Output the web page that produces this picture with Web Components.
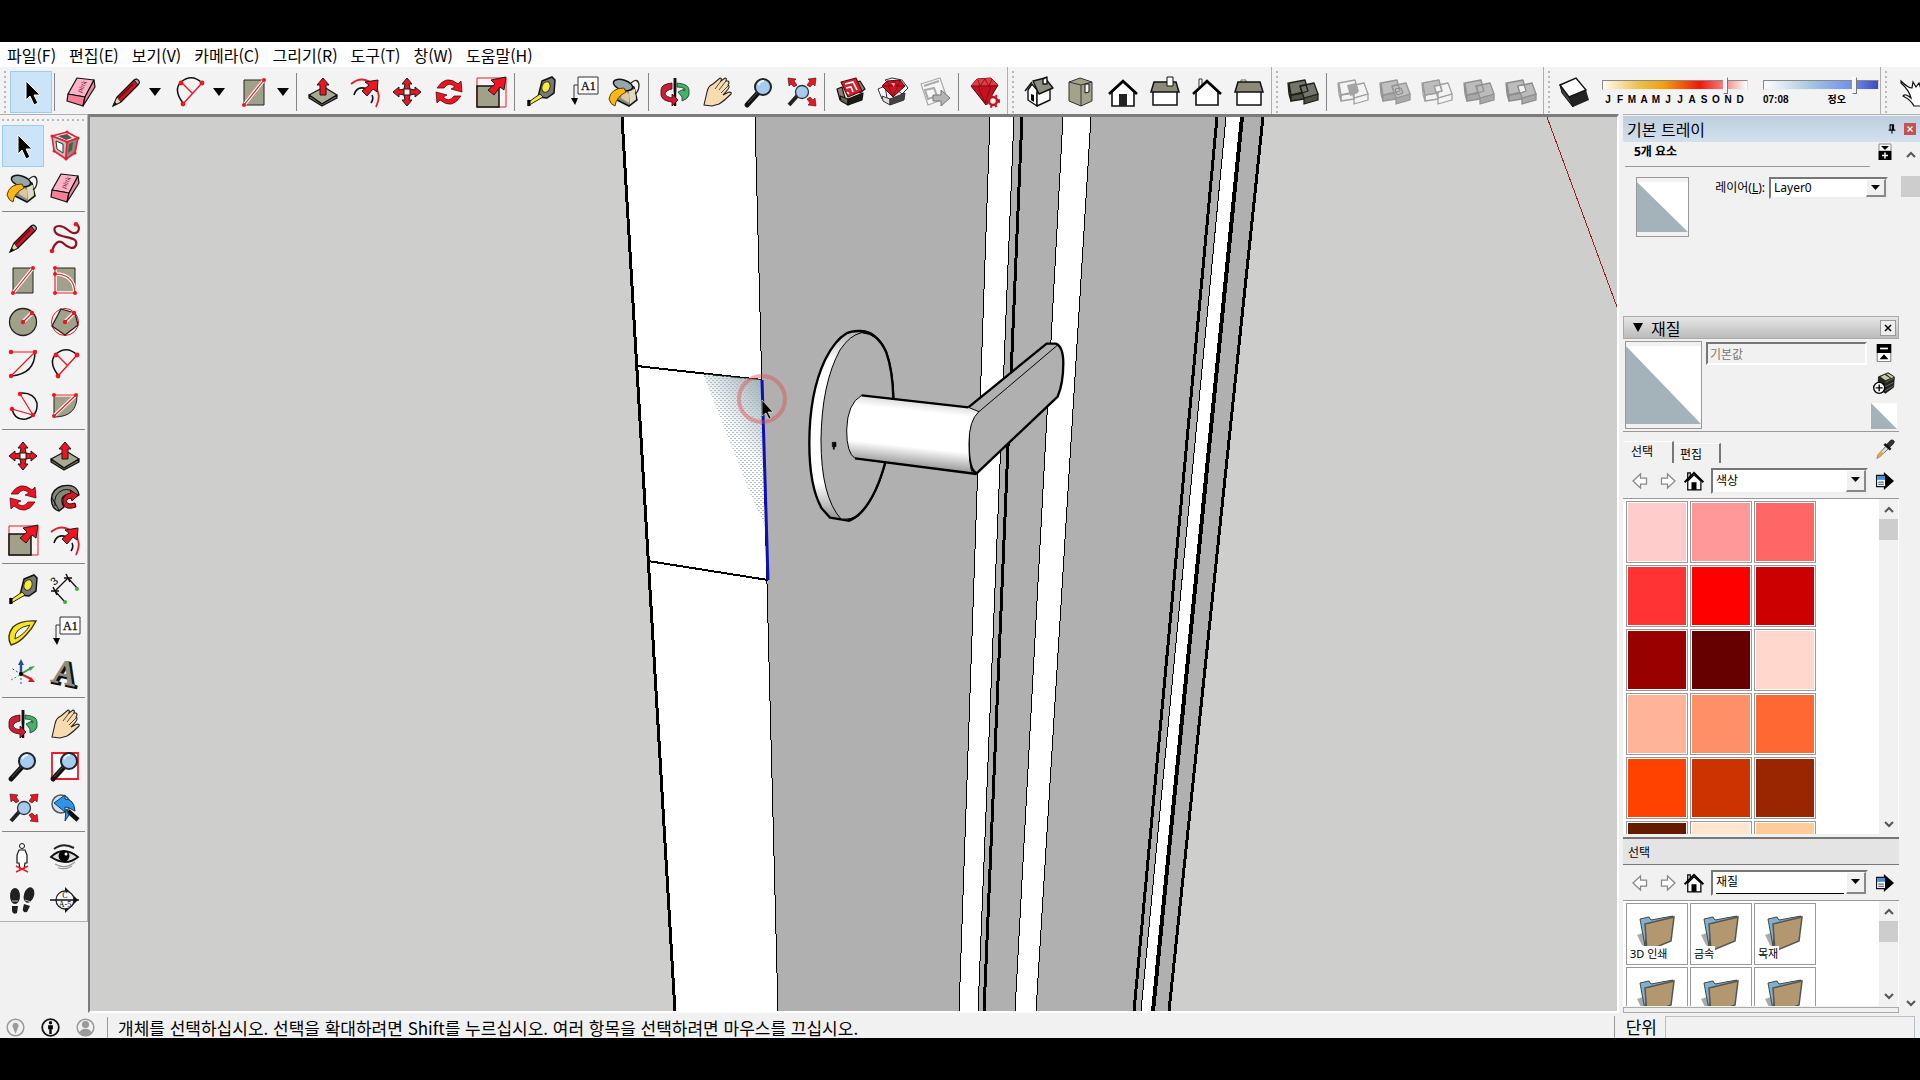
<!DOCTYPE html>
<html lang="ko">
<head>
<meta charset="utf-8">
<title>SketchUp</title>
<style>
  body {
    margin: 0;
    height: 100vh;
    display: grid;
    grid-template-rows: 42px minmax(0, 1fr) 42px;
    background: #000;
    color: #000;
    font-family: "Noto Sans", "Noto Sans CJK KR", sans-serif;
  }

  sk-app {
    grid-row: 2;
  }
</style>
</head>
<body>
<sk-app>
  <sk-menu-bar slot="menu"></sk-menu-bar>
  <sk-top-tools slot="tools"></sk-top-tools>
  <sk-palette slot="palette"></sk-palette>
  <sk-viewport slot="view"></sk-viewport>
  <sk-tray slot="tray"></sk-tray>
  <sk-status-bar slot="status">개체를 선택하십시오. 선택을 확대하려면 Shift를 누르십시오. 여러 항목을 선택하려면 마우스를 끄십시오.</sk-status-bar>
</sk-app>

<script>
const CUBES = (fill, side, line) => `
  <g stroke="${line}" stroke-width="1.3" stroke-linejoin="round" fill="${fill}">
    <path d="M2 18l-1-11 3 12v6z"/><path d="M4 19v6l13-2v-6z" fill="${side}"/><path d="M2 7l16-3 3 11-17 4z"/>
    <path d="M17 22l14-4v6l-14 4z" fill="${side}"/><path d="M13 10l14-3 4 11-14 4z"/><path d="M13 10l6-1 2 6-6 2z" fill="none"/>
  </g>`;

const MAGNIFIER = `
  <path d="M4 29l11-12" stroke="#111" stroke-width="5" stroke-linecap="round"/>
  <path d="M5 27l9-10" stroke="#555" stroke-width="1"/>
  <circle cx="20" cy="11" r="8" fill="#a5cbee" stroke="#222" stroke-width="2"/>
  <path d="M15 9q2-4 6-4" stroke="#e4f3ff" stroke-width="2" fill="none"/>`;

const ARROW = 'fill="#f01420" stroke="#1a1a1a" stroke-width="1"';

const ICONS = {
  select: `<path d="M11 5v19l4-4 4 9 4-2-4-8h6z" stroke="#fff" stroke-width="1"/>`,
  component: `
    <g stroke="#e0243c" stroke-width="1.6" fill="#d8d8cc" stroke-linejoin="round">
      <path d="M3 6l15-4 11 6-11 4z" fill="#e8e8e0"/><path d="M3 6l15 6-1 17-12-8z" fill="#c2c2b8"/><path d="M29 8l-3 15-9 6 1-17z" fill="#8b8b7b"/>
    </g>
    <path d="M7 11l7 3v9l-6-4z" fill="#fff" stroke="#333"/><path d="M9 6l9-2 5 4-6 2zM20 14l4-2-1 8-4 3z" fill="#55564c"/>
    <g fill="#e81c2c"><circle cx="3" cy="6" r="1.500"/><circle cx="18" cy="2" r="1.500"/><circle cx="29" cy="8" r="1.500"/><circle cx="18" cy="12" r="1.500"/><circle cx="5" cy="21" r="1.500"/><circle cx="17" cy="29" r="1.500"/><circle cx="26" cy="23" r="1.500"/></g>`,
  paint: `
    <path d="M10 6l15 5 3 13-8 6-12-6z" fill="#8a8a84" stroke="#111" stroke-width="1.5"/>
    <path d="M20 15l6-2 1 10-6 5z" fill="#e0dcc0"/><path d="M12 22l8 5v-9l-6-4z" fill="#d8c9a0"/>
    <ellipse cx="14" cy="9" rx="10" ry="5" transform="rotate(18 14 9)" fill="#96a7ac" stroke="#111" stroke-width="1.5"/>
    <path d="M22 7q7-6 8 2 0 6-4 9" fill="none" stroke="#222" stroke-width="1.300"/>
    <path d="M15 12Q2 12 0 23q2 6 6 7 1-9 11-14z" fill="#ffb813" stroke="#5a3b00"/>`,
  eraser: `
    <g stroke="#111" stroke-width="1.2" stroke-linejoin="round">
      <path d="M12 2l17 2-9 17-17-3z" fill="#ffb3c8"/><path d="M3 18l17 3-2 9-16-5z" fill="#f97f97"/><path d="M29 4l1 7-12 19 2-9z" fill="#e88ba0"/>
    </g>
    <text x="0" y="0" transform="translate(16 17) rotate(-62)" font-size="7" font-family="Liberation Serif" fill="#7a1530">pink</text>`,
  pencil: `
    <path d="M3 30l4-9L24 4q3-2 5 1 1 2-1 4L11 26z" fill="#c91722" stroke="#111" stroke-width="1.2"/>
    <path d="M3 30l4-9 4 5z" fill="#e3d7a4" stroke="#111" stroke-width=".8"/><path d="M3 30l2-4 2 2z"/>
    <path d="M9 22L23 8" stroke="#6d0a10" stroke-width="1.5"/><path d="M24 4q3-2 5 1 1 2-1 4z" fill="#a9a9b8" stroke="#111"/>`,
  freehand: `
    <path d="M3 29c3-9 7-11 11-8 5 5 11 7 13 2 2-7-7-7-14-9-9-2-10-10-3-10 7 0 8 5 14 7 6 1 8-6 3-9" fill="none" stroke="#8e1420" stroke-width="2.2"/>
    <g fill="#f01420"><circle cx="3" cy="29" r="2.300"/><circle cx="27" cy="2.300" r="2.300"/></g>`,
  rect: `
    <path d="M6 4h20v25H6z" fill="#a1a189" stroke="#222"/><path d="M6 29L26 4" stroke="#fff" stroke-width="3.500"/>
    <path d="M6 29L26 4" stroke="#f01420" stroke-width="1.200"/><g fill="#f01420"><circle cx="6" cy="29" r="2"/><circle cx="26" cy="4" r="2"/></g>`,
  rotrect: `
    <path d="M6 4h20v25H6z" fill="#a1a189" stroke="#222"/><path d="M6 4v25h20M6 10q19 0 20 19" fill="none" stroke="#fff" stroke-width="3.500"/>
    <path d="M6 4v25h20M6 10q19 0 20 19" fill="none" stroke="#f01420" stroke-width="1.200"/>
    <g fill="#f01420"><circle cx="6" cy="4" r="2"/><circle cx="6" cy="10" r="2"/><circle cx="6" cy="29" r="2"/><circle cx="26" cy="29" r="2"/></g>`,
  circle: `
    <circle cx="16" cy="16" r="13.500" fill="#a1a189" stroke="#222" stroke-width="1.300"/><path d="M16 16l9-9" stroke="#fff" stroke-width="4"/>
    <path d="M16 16l9-9" stroke="#f01420" stroke-width="1.300"/><g fill="#f01420"><circle cx="16" cy="16" r="2.200"/><circle cx="25" cy="7" r="2.200"/></g>`,
  polygon: `
    <circle cx="16" cy="16" r="13.500" fill="none" stroke="#f01420"/><path d="M12 3l14 4 3 12-13 10-13-9z" fill="#a1a189" stroke="#222" stroke-width="1.300"/>
    <path d="M16 16l9-9" stroke="#fff" stroke-width="4"/><path d="M16 16l9-9" stroke="#f01420" stroke-width="1.300"/>
    <g fill="#f01420"><circle cx="16" cy="16" r="2.200"/><circle cx="25" cy="7" r="2.200"/></g>`,
  arcline: `
    <path d="M28 4q0 22-24 24" fill="none" stroke="#111" stroke-width="1.500"/><path d="M4 28L28 4H4" fill="none" stroke="#f01420" stroke-width="1.200"/>
    <g fill="#f01420"><circle cx="4" cy="4" r="2.200"/><circle cx="28" cy="4" r="2.200"/><circle cx="4" cy="28" r="2.200"/></g>`,
  arc: `
    <path d="M9 27Q-1 14 7 6q11-9 21 1" fill="none" stroke="#111" stroke-width="1.500"/><path d="M9 28L28 7M7 6l11 11" fill="none" stroke="#f01420" stroke-width="1.400"/>
    <g fill="#f01420"><circle cx="7" cy="7" r="2.400"/><circle cx="28" cy="7" r="2.400"/><circle cx="9" cy="28" r="2.400"/></g>`,
  arc3: `
    <path d="M13 3q14-1 17 10 1 13-11 16Q8 31 5 19" fill="none" stroke="#111" stroke-width="1.500"/><path d="M13 4l13 21-21-6" fill="none" stroke="#f01420" stroke-width="1.200"/>
    <g fill="#f01420"><circle cx="13" cy="4" r="2.200"/><circle cx="26" cy="25" r="2.200"/><circle cx="5" cy="19" r="2.200"/></g>`,
  pie: `
    <path d="M5 6h23Q28 27 5 27z" fill="#a1a189" stroke="#222"/><path d="M5 26L27 5H5" fill="none" stroke="#fff" stroke-width="3.500"/>
    <path d="M5 26L27 5H5" fill="none" stroke="#f01420" stroke-width="1.200"/><g fill="#f01420"><circle cx="5" cy="5" r="2"/><circle cx="27" cy="5" r="2"/><circle cx="5" cy="26" r="2"/></g>`,
  move: `
    <g ${ARROW}>
      <path d="M16 2l5 6h-3l1 5h-6l1-5h-3z"/><path d="M16 2l5 6h-3l1 5h-6l1-5h-3z" transform="rotate(90 16 16)"/>
      <path d="M16 2l5 6h-3l1 5h-6l1-5h-3z" transform="rotate(180 16 16)"/><path d="M16 2l5 6h-3l1 5h-6l1-5h-3z" transform="rotate(270 16 16)"/>
    </g>`,
  pushpull: `
    <g stroke="#111" stroke-width="1.200" stroke-linejoin="round"><path d="M2 19l15-8 13 8-15 9z" fill="#a9aa94"/><path d="M2 19v3l13 8 15-8v-3l-15 9z" fill="#6c6d5c"/></g>
    <path d="M16 2l6 7h-3v10h-6V9h-3z" ${ARROW}/>`,
  rotate: `
    <g fill="#f01420" stroke="#560b10" stroke-width=".8"><path d="M4 12Q13-2 25 8l3-3 1 11-11-3 4-2q-6-6-11 1z"/><path d="M28 20Q19 34 7 24l-3 3-1-11 11 3-4 2q6 6 11-1z"/></g>`,
  followme: `
    <path d="M3 22Q0 8 13 4q15-3 17 9l-5 3q-2-4-8-3-7 3-2 12l-5 4q-5-1-7-7z" fill="#85867a" stroke="#111" stroke-width="1.400"/>
    <path d="M6 24Q4 12 14 8q8-2 12 4M3 16l7 12" fill="none" stroke="#111"/>
    <path d="M27 25q-11 4-13-4-1-9 8-10l-1-3 8 5-6 6-1-3q-6 1-4 5 2 2 8 0z" fill="#d31825" stroke="#400"/>`,
  scale: `
    <path d="M2 2h29v29H2z" fill="#fff4f4" stroke="#e0202c"/><path d="M2 10h22v21H2z" fill="#a1a189" stroke="#111" stroke-width="1.500"/>
    <path d="M31 1l-2 13-4-3-6 8-6-5 7-6-4-4z" ${ARROW}/>`,
  offset: `
    <path d="M2 8Q14-2 26 10q7 9 1 21" fill="none" stroke="#e0202c" stroke-width="1.800"/><path d="M5 19q3-10 13-6m5 6q2 4-1 8" fill="none" stroke="#111" stroke-width="1.600"/>
    <path d="M29 4l-1 12-4-3-6 7-5-5 7-6-4-3z" ${ARROW}/>`,
  tape: `
    <path d="M17 5l10-4 3 3-1 13-7 5-9-1z" fill="#777" stroke="#111" stroke-width="1.500"/><ellipse cx="21" cy="11" rx="4" ry="5.500" transform="rotate(20 21 11)" fill="#f7ed36" stroke="#333"/>
    <path d="M15 18L5 25l-2-1v6l3-2 12-7z" fill="#fbe92d" stroke="#222"/><path d="M4 24v6" stroke="#000" stroke-width="3"/>`,
  dimension: `
    <path d="M6 17L19 4M6 17l9 10M19 4l9 10" fill="none" stroke="#111" stroke-width="1.300"/><path d="M2 17h8M4 13l4 8M15 4h8M17 0l4 8" stroke="#111" stroke-width="1.500"/>
    <text x="3" y="10" font-size="11" font-family="Liberation Sans" transform="rotate(-40 7 8)">3</text><circle cx="16" cy="28" r="2" fill="#36b336"/><circle cx="28" cy="15" r="2" fill="#36b336"/>`,
  protractor: `
    <path d="M4 29Q-1 20 6 11 14 4 29 5q-4 8-10 14-7 8-15 10z" fill="#f4e52c" stroke="#3b3500" stroke-width="1.400"/><path d="M8 23q-1-11 15-14-5 9-15 14z" fill="#f3f3f3" stroke="#3b3500"/>`,
  text: `
    <path d="M11 1h20v17H11z" fill="#fff" stroke="#333"/><path d="M11 9H7v16" fill="none" stroke="#333"/><path d="M4 22h7l-3 7z"/>
    <text x="14" y="14" font-size="12" font-family="Liberation Serif" stroke="#111" stroke-width=".3">A1</text>`,
  axes: `
    <path d="M14 16L14 28M14 16L4 10" stroke="#2b4f9a" stroke-dasharray="2 2"/><path d="M14 16l10-6" stroke="#38a047" stroke-width="2"/><path d="M4 22l9-5" stroke="#38a047" stroke-dasharray="2 2"/>
    <path d="M14 15V6" stroke="#2351a0" stroke-width="2.500"/><path d="M14 1l3 6h-6z" fill="#2351a0"/><path d="M28 8l-5 5-1-4z" fill="#38a047"/><path d="M14 16l10 5" stroke="#d2202a" stroke-width="2"/><path d="M28 24l-7 0 3-5z" fill="#d2202a"/><circle cx="14" cy="16" r="2"/>`,
  text3d: `
    <g font-family="Liberation Serif" font-size="34" stroke="#111" transform="rotate(12 16 16)"><text x="5" y="27" fill="#3c3d35" stroke-width="3">A</text><text x="3" y="26" fill="#8d8e80" stroke="#8d8e80" stroke-width="1">A</text></g>`,
  orbit: `
    <path d="M16 2v28" stroke="#111" stroke-width="2.500"/><path d="M13 7Q2 8 2 14v5q1 6 11 7v4l6-6-6-6v4q-6-1-7-4 1-4 7-5z" fill="#c81e3a" stroke="#400" stroke-width=".8"/>
    <path d="M18 7q12 1 12 7v5q-1 4-7 6v-4l-4-5 6-3v2q2-1 1-2-2-2-8-2z" fill="#46b06c" stroke="#0b4420" stroke-width=".8"/><path d="M16 2v14" stroke="#111" stroke-width="2.500"/>`,
  hand: `<path d="M3 29l3-13q1-6 6-8l7-6q2 0 1 3l4-3q2 0 1 3l2 0q2 1 0 4l1 1q1 2-6 9l6-3q3 0 2 2-7 7-12 10l-7 2z" fill="#f8dcb0" stroke="#222" stroke-width="1.100"/><path d="M20 5l-6 8M25 5l-7 9M28 9l-8 8" stroke="#222" stroke-width=".8"/>`,
  zoom: MAGNIFIER,
  zoomwin: `<path d="M3 3h26v26H3z" fill="#fff" stroke="#e81c2c" stroke-width="1.800"/>${MAGNIFIER}`,
  extents: `
    <path d="M4 29l9-10" stroke="#222" stroke-width="4"/><circle cx="17" cy="16" r="6.500" fill="#a5cbee" stroke="#333" stroke-width="1.300"/>
    <g fill="#f01420" stroke="#1a1a1a" stroke-width=".6"><path d="M3 2l8 1-2 2 3 4-3 2-3-3-2 2z"/><path d="M31 2l-8 1 2 2-3 4 3 2 3-3 2 2z"/><path d="M31 30l-8-1 2-2-3-4 3-2 3 3 2-2z"/></g>`,
  previous: `
    <circle cx="12" cy="12" r="9" fill="#cfe2f4" stroke="#555" stroke-width="1.500"/><path d="M19 19l10 9" stroke="#111" stroke-width="4.500"/>
    <path d="M5 11l11-8v4q9 0 10 12l-4-2q-2-2-6-2v5z" fill="#2f93e6" stroke="#123a66"/><path d="M17 17l-1 12 4-6z" fill="#2f93e6" stroke="#123a66"/>`,
  walkman: `<circle cx="15" cy="4" r="2.500" fill="#fff" stroke="#111"/><path d="M12 8h6l2 5v8h-2l-1 6h-4l-1-6h-2v-8z" fill="#fff" stroke="#111" stroke-width="1.200"/><path d="M9 30l12-6M9 24l12 6" stroke="#e81c2c" stroke-width="1.400"/>`,
  look: `
    <path d="M5 7q9-7 20-1" fill="none" stroke="#222" stroke-width="2"/><path d="M2 15Q14 3 29 15q-12 10-27 0z" fill="#ddd" stroke="#111" stroke-width="1.800"/>
    <circle cx="15" cy="14" r="5.500"/><circle cx="17" cy="12" r="1.500" fill="#fff"/><path d="M6 22q10 6 20-2M9 26q8 2 14-2" fill="none" stroke="#999" stroke-width="1.200"/>`,
  walk: `
    <g fill="#202020"><ellipse cx="8" cy="12" rx="5" ry="8"/><path d="M5 22l6 0-1 7q-4 2-5-2z"/><ellipse cx="22" cy="11" rx="5" ry="8" transform="rotate(18 22 11)"/><path d="M17 20l6 2-3 6q-5 1-4-4z"/></g>
    <path d="M5 17h6M18 16l6 2" stroke="#bbb"/>`,
  section: `
    <path d="M16 3l13 13-13 13" fill="#111"/><circle cx="16" cy="16" r="9" fill="#f6f6f6" stroke="#222" stroke-width="1.300"/><path d="M1 16h29" stroke="#111" stroke-width="1.500"/>
    <g font-family="Liberation Serif" font-size="8" text-anchor="middle"><text x="16" y="14">C</text><text x="16" y="23">A-5</text></g>`,
  warehouse: `
    <g stroke="#111" stroke-width="1.200" stroke-linejoin="round"><path d="M2 13l5-2 3 11-5 2z" fill="#8c8474"/><path d="M22 6l3-1 5 8-5 4z" fill="#8c8474"/>
    <path d="M5 20l8 3v6l-7-4z" fill="#6b6457"/><path d="M13 23l15-6-1 7-14 5z" fill="#1c1a16"/><path d="M6 6l15-4 6 13-14 6z" fill="#d3202c" stroke="#5b0c12"/></g>
    <path d="M10 8l8-2 4 8M11 12l5-1 2 5M12 16l2 2" fill="none" stroke="#fff" stroke-width="1.600"/>`,
  extwarehouse: `
    <g stroke="#333" stroke-linejoin="round"><path d="M1 13l7-3 2 12-5 1z" fill="#fff"/><path d="M8 4l7-2 10 2 6 8-6 6z" fill="#fff"/><path d="M5 20l8 3v6l-7-4z" fill="#ddd"/><path d="M13 23l15-6-1 7-14 5z" fill="#444"/></g>
    <path d="M5 10l5-5 13-1 5 6-12 11z" fill="#cf1524" stroke="#50060e"/><path d="M5 10h23M11 10l5 10 5-10M10 5l3 5 4-5 4 5 2-6" fill="none" stroke="#7a0812" stroke-width=".8"/><path d="M14 7l4 0-1 4z" fill="#ff9a9a"/>`,
  layout: `
    <path d="M2 8l19-6 7 20-19 7z" fill="#f6f6f6" stroke="#aaa" stroke-width="1.200"/><path d="M5 10l15-5M6 14l9-2 3 8-9 3z" stroke="#aaa" fill="none" stroke-width="2"/>
    <path d="M14 19h8v-5l9 8-9 8v-5h-8z" fill="#b5b5b5" stroke="#777"/>`,
  extmanager: `
    <path d="M2 10l6-7 14-1 7 7-12 20z" fill="#c41220" stroke="#4e070d"/><path d="M2 10l6-7 14-1 7 7z" fill="#e43a44"/><path d="M2 10h27M9 10l7 17 6-17M9 4l2 6 5-7 4 7 3-7" fill="none" stroke="#760b14" stroke-width=".8"/>
    <circle cx="24" cy="25" r="4" fill="#f3f3f3" stroke="#c41220" stroke-width="2.500"/><circle cx="24" cy="25" r="6" fill="none" stroke="#c41220" stroke-width="2" stroke-dasharray="2 3"/>`,
  iso: `
    <g stroke="#111" stroke-width="1.400" stroke-linejoin="round"><path d="M5 14v10l9 6V14l-5-6z" fill="#fff"/><path d="M14 17l13-5v12l-13 6z" fill="#fff"/><path d="M10 5l12-3 8 10-14 6z" fill="#8e8f7f"/><path d="M9 6l-7 9M20 3v5h4V1z" fill="#fff"/></g><path d="M8 18l3 1v7l-3-2z"/>`,
  top: `<g stroke="#333" stroke-linejoin="round" fill="#a4a38a"><path d="M4 6l11-4 12 4v19l-11 5-12-5z"/><path d="M4 6l12 3 11-3M16 9v21" fill="none"/></g><path d="M20 8h4v8l-4 1z" fill="#fff" stroke="#111"/>`,
  front: `<path d="M5 16L16 6l11 10v14H5z" fill="#fff" stroke="#111" stroke-width="1.600"/><path d="M2 18L16 5l14 13" fill="none" stroke="#000" stroke-width="2.600"/><path d="M12 30V18h8v12z" fill="#222"/>`,
  right: `<path d="M4 15h24v14H4z" fill="#fff" stroke="#111" stroke-width="1.500"/><path d="M5 6h22l3 10H2z" fill="#8b8b78" stroke="#111" stroke-width="1.500"/><path d="M18 1h6v9h-6z" fill="#fff" stroke="#111"/>`,
  back: `<path d="M8 3h3v8H8z" fill="#fff" stroke="#333"/><path d="M5 16L16 6l11 10v13H5z" fill="#fff" stroke="#111" stroke-width="1.600"/><path d="M2 18L16 5l14 13" fill="none" stroke="#000" stroke-width="2.400"/>`,
  left: `<path d="M8 4h5v4H8z" fill="#fff" stroke="#666"/><path d="M4 15h24v14H4z" fill="#fff" stroke="#111" stroke-width="1.500"/><path d="M5 6h22l3 10H2z" fill="#8b8b78" stroke="#111" stroke-width="1.500"/>`,
  outer: CUBES("#75766a", "#4f5046", "#1e1e1a"),
  intersect: CUBES("none", "none", "#a0a0a0") + `<path d="M10 9l9-2 2 10-8 3z" fill="#a4a4a4"/>`,
  union: CUBES("#c0c0c0", "#aaa", "#969696") + `<path d="M16 13l6-1 2 5-6 2z" fill="none" stroke="#888"/>`,
  subtract: CUBES("none", "none", "#a0a0a0") + `<path d="M2 7l16-3 1 5-6 1 2 7-11 2z" fill="#bcbcbc" stroke="#999"/>`,
  trim: CUBES("#bcbcbc", "#a8a8a8", "#919191"),
  split: CUBES("#bcbcbc", "#a8a8a8", "#8c8c8c") + `<path d="M13 10l6-1 2 6-6 2z" fill="#f3f3f3" stroke="#888"/>`,
  shadow: `<path d="M10 21l17-7 3 10-16 7z" fill="#222"/><path d="M1 9l2 8 11 14-4-10z" fill="#444" stroke="#111"/><path d="M1 9l16-7 10 12-17 7z" fill="#fff" stroke="#111" stroke-width="1.400"/>`,
  interact: `<path d="M5 5q7 7 11 7l1-6 3 5 3-4 2 6 5-2v19H18q-3-6-11-10 2-3 8 2-2-8-10-15z" fill="#fff" stroke="#111" stroke-width="1.200"/>`,

  pin: `<path d="M11 5h9v14h-9zM17 5v14M7 19h18M16 19v9" fill="none" stroke="#000" stroke-width="3"/>`,
  close: `<path d="M8 8l16 16M24 8L8 24" stroke="currentColor" stroke-width="4"/>`,
  expand: `<path d="M4 0h24v14H4z" fill="#fff" stroke="#888" stroke-width="2"/><path d="M8 4h16l-8 8z"/><path d="M3 14h26v18H3z"/><path d="M16 17v12M10 23h12" stroke="#fff" stroke-width="3"/>`,
  collapse: `<path d="M4 15h24v16H4z" fill="#fff" stroke="#888" stroke-width="2"/><path d="M8 27h16l-8-9z"/><path d="M3 0h26v16H3z"/><path d="M9 8h14" stroke="#fff" stroke-width="3"/>`,
  create: `<path d="M8 7l14-6 9 6-1 15-12 9-11-8z" fill="#25251f" stroke="#000"/><path d="M11 7l6-3 8 5-7 3zM19 3l3-1 8 5-3 2z" fill="#c9c9a4"/><path d="M18 15l12-6M18 21l12-6M18 27l12-7" stroke="#888"/><circle cx="9" cy="23" r="8" fill="#fff" stroke="#000" stroke-width="2"/><path d="M9 18v10M4 23h10" stroke="#000" stroke-width="2"/>`,
  dropper: `<path d="M18 9l7-7q4-2 6 2 0 3-8 10z" fill="#333" stroke="#111"/><path d="M15 8l10 9" stroke="#111" stroke-width="4"/><path d="M17 12l4 4L8 28l-5 3 2-6z" fill="#ddd" stroke="#222"/><path d="M9 20l5 3-6 5-5 3 2-6z" fill="#e3ae2f"/>`,
  prev: `<path d="M2 16L17 2v8h12v12H17v8z" fill="#fff" stroke="#888" stroke-width="2.500"/>`,
  next: `<path d="M30 16L15 2v8H3v12h12v8z" fill="#fff" stroke="#888" stroke-width="2.500"/>`,
  home: `<path d="M6 15V3h4v8M6 16v14h21V16L16 6z" fill="#fff" stroke="#000" stroke-width="2"/><path d="M1 18L16 3l15 15" fill="none" stroke="#000" stroke-width="3"/><path d="M12 30V18h8v12z"/>`,
  details: `<path d="M14 0l18 16-18 16z"/><path d="M1 6h16v20H1z" fill="#fff" stroke="#111" stroke-width="2"/><path d="M2 7h14v7H2z" fill="#4c8fd8"/><path d="M4 18h10M4 22h10" stroke="#4c6f98" stroke-width="2"/>`,
  geo: `<circle cx="16" cy="16" r="14" fill="none" stroke="#999" stroke-width="2.500"/><path d="M16 27l-5-13q0-6 5-6t5 6z" fill="#999"/>`,
  credit: `<circle cx="16" cy="16" r="14" fill="none" stroke="#111" stroke-width="3"/><circle cx="16" cy="8" r="2.800"/><path d="M12 12h8v7h-2v8h-4v-8h-2z"/>`,
  account: `<circle cx="16" cy="16" r="14" fill="none" stroke="#999" stroke-width="2.500"/><circle cx="16" cy="11" r="6" fill="#999"/><path d="M6 25q2-7 10-7t10 7q-10 9-20 0z" fill="#999"/>`,
};

// shared helper: attach an open root holding the given markup
class SkElement extends HTMLElement {
  render(html) {
    const template = document.createElement("template");
    template.innerHTML = html;
    this.attachShadow({ mode: "open" }).appendChild(template.content.cloneNode(true));
  }
}

class SkIcon extends SkElement {
  connectedCallback() {
    this.render(`
      <style>
        :host { display: block; width: var(--icon-size, 32px); height: var(--icon-size, 32px); flex: none; }
        svg { display: block; width: 100%; height: 100%; overflow: visible; }
      </style>
      <svg viewBox="0 0 32 32" aria-hidden="true" fill="#000"><g>${ICONS[this.getAttribute("name")]}</g></svg>
    `);
  }
}

class SkTool extends SkElement {
  connectedCallback() {
    const name = this.getAttribute("name");
    this.render(`
      <style>
        :host { display: flex; flex: none; align-items: center; }
        :host([split]) { padding: 0 3px; }
        button { width: 42px; height: 42px; padding: 0; border: 0; background: none; display: grid; place-items: center; }
        :host([active]) button { background: #cbe4f8; border: 1px solid #98cdf5; }
        .drop { width: 16px; }
      </style>
      <button type="button" title="${name}" aria-label="${name}"><sk-icon name="${name}"></sk-icon></button>
      ${this.hasAttribute("split") ? `
        <button type="button" class="drop" aria-label="${name} 옵션">
          <svg width="12" height="8" viewBox="0 0 12 8"><path d="M0 0h12L6 8z"/></svg>
        </button>` : ""}
    `);
  }
}

class SkApp extends SkElement {
  connectedCallback() {
    this.render(`
      <style>
        :host { display: flex; flex-direction: column; min-width: 0; min-height: 0; background: #f1f1f1; overflow: hidden; }
        main { flex: 1; min-height: 0; display: grid; grid-template-columns: 88px minmax(0, 1fr) 301px; }
        ::slotted([slot="view"]) { min-height: 0; }
      </style>
      <slot name="menu"></slot>
      <slot name="tools"></slot>
      <main>
        <slot name="palette"></slot>
        <slot name="view"></slot>
        <slot name="tray"></slot>
      </main>
      <slot name="status"></slot>
    `);
  }
}

class SkMenuBar extends SkElement {
  connectedCallback() {
    const items = ["파일(F)", "편집(E)", "보기(V)", "카메라(C)", "그리기(R)", "도구(T)", "창(W)", "도움말(H)"];
    this.render(`
      <style>
        :host { display: block; background: #fff; }
        nav { display: flex; gap: 13px; height: 25px; box-sizing: border-box; padding: 2px 7px 0; }
        button { border: 0; padding: 0; background: none; color: #000; font: 16px/23px "Noto Sans CJK KR", sans-serif; }
      </style>
      <nav>${items.map((item) => `<button type="button">${item}</button>`).join("")}</nav>
    `);
  }
}

class SkTopTools extends SkElement {
  connectedCallback() {
    const groups = [
      "select* | eraser pencil+ arc+ rect+ | pushpull offset move rotate scale | tape text paint | orbit hand zoom extents | warehouse extwarehouse layout | extmanager",
      "iso top front right back left",
      "outer | intersect union subtract trim split",
    ];
    const tools = (list) => list.split(" ").map((t) => {
      if (t === "|") return "<hr>";
      const flag = t.endsWith("*") ? "active" : t.endsWith("+") ? "split" : "";
      return `<sk-tool name="${t.replace(/[*+]/, "")}" ${flag}></sk-tool>`;
    }).join("");
    this.render(`
      <style>
        :host { display: flex; height: 47px; overflow: hidden; background: #f3f3f3; }
        section { display: flex; flex: none; align-items: center; padding: 2px 1px 0 0; border-right: 1px solid #b0b0b0; }
        section::before { content: ""; width: 10px; height: 42px; flex: none;
          background: repeating-linear-gradient(#b8b8b8 0 2px, transparent 2px 5px) 4px 0 / 2px 100% no-repeat; }
        hr { width: 1px; height: 38px; margin: 0 5px 0 2px; border: 0; background: #858585; }
        label { display: block; font: 700 10px/14px "Liberation Sans", "Noto Sans CJK KR", sans-serif; }
        .months { width: 146px; margin: 0 9px 0 6px; }
        .time { width: 116px; margin-left: 6px; overflow: hidden; }
        .text { display: flex; justify-content: space-between; }
        .months .text { display: grid; grid-template-columns: repeat(12, 12px); justify-content: start; text-align: center; }
        .time .text { padding: 0 33px 0 0; }
        input { appearance: none; display: block; width: 100%; height: 16px; margin: 0; background: none; }
        input::-webkit-slider-runnable-track { height: 10px; border: 1px solid; border-color: #888 #ddd #eee #888; background: var(--track); }
        input::-webkit-slider-thumb { appearance: none; width: 5px; height: 17px; margin-top: -4px; background: #f4f4f4; border: 1px solid; border-color: #fff #777 #777 #fff; }
        .months input { --track: linear-gradient(90deg, #fffdf0, #ecc04a 25%, #f0a010 42%, #f01808 67%, #f48080 84%, #fff); }
        .time input { --track: linear-gradient(90deg, #fff, #9fc0de 45%, #6f8df0 78%, #3c4cc0); }
      </style>
      ${groups.map((g) => `<section>${tools(g)}</section>`).join("")}
      <section>
        <sk-tool name="shadow"></sk-tool>
        <label class="months"><input type="range" min="0" max="100" value="86" aria-label="날짜">
          <span class="text">${[..."JFMAMJJASOND"].map((m) => `<span>${m}</span>`).join("")}</span></label>
        <label class="time"><input type="range" min="0" max="100" value="81" aria-label="시간">
          <span class="text"><span>07:08</span><span>정오</span></span></label>
      </section>
      <section><sk-tool name="interact"></sk-tool></section>
    `);
  }
}

class SkPalette extends SkElement {
  connectedCallback() {
    const groups = [
      ["select*", "component", "paint", "eraser"],
      ["pencil", "freehand", "rect", "rotrect", "circle", "polygon", "arcline", "arc", "arc3", "pie"],
      ["move", "pushpull", "rotate", "followme", "scale", "offset"],
      ["tape", "dimension", "protractor", "text", "axes", "text3d"],
      ["orbit", "hand", "zoom", "zoomwin", "extents", "previous"],
      ["walkman", "look", "walk", "section"],
    ];
    this.render(`
      <style>
        :host { display: block; border-top: 1px solid #b0b0b0; }
        .bar { background: #f3f3f3; border: solid #b0b0b0; border-width: 0 1px 1px 0; padding: 4px 2px 0; }
        .bar::before { content: ""; display: block; height: 2px; margin-bottom: 4px;
          background: repeating-linear-gradient(90deg, #b8b8b8 0 2px, transparent 2px 5px); }
        .group { display: grid; grid-template-columns: 42px 42px; }
        .group + .group { margin-top: 2px; padding-top: 5px; border-top: 1px solid #858585; }
      </style>
      <div class="bar">
        ${groups.map((g) => `<div class="group">${g.map((t) =>
          `<sk-tool name="${t.replace("*", "")}" ${t.endsWith("*") ? "active" : ""}></sk-tool>`).join("")}</div>`).join("")}
      </div>
    `);
  }
}

class SkViewport extends SkElement {
  connectedCallback() {
    this.render(`
      <style>
        :host { display: block; overflow: hidden; background: #cececc; border: solid; border-width: 3px 2px 2px; border-color: #7c7c7c #fff #fff #7c7c7c; }
        svg { display: block; width: 100%; height: 100%; }
      </style>
      <svg viewBox="90 117 1527 894" preserveAspectRatio="xMidYMid slice" role="img" aria-label="문 손잡이 모델">
        <defs>
          <linearGradient id="rim" x1="0" y1="0" x2="0" y2="1"><stop offset="0" stop-color="#b0b0b0"/><stop offset=".15" stop-color="#fff"/><stop offset=".8" stop-color="#fff"/><stop offset="1" stop-color="#909090"/></linearGradient>
          <linearGradient id="tube" gradientUnits="userSpaceOnUse" x1="405" y1="274" x2="384" y2="468"><stop offset="0" stop-color="#ddd"/><stop offset=".15" stop-color="#fff"/><stop offset=".7" stop-color="#fff"/><stop offset="1" stop-color="#999"/></linearGradient>
          <linearGradient id="fade" gradientUnits="userSpaceOnUse" x1="730" y1="430" x2="772" y2="400"><stop offset="0" stop-color="#a5b5bd" stop-opacity="0"/><stop offset="1" stop-color="#a5b5bd"/></linearGradient>
          <pattern id="dots" width="4" height="4" patternUnits="userSpaceOnUse"><path d="M0 0h2v1H0zM2 2h2v1H2z" fill="#b4c2c9"/></pattern>
        </defs>

        <path d="M622 117h133l23 894H675z" fill="#fff"/>
        <path d="M755 117h508l-94 894H778z" fill="#b0b0b0"/>
        <path d="M990 117h24l-36 894h-19zM1063 117h28l-55 894h-21zM1226 117h16l-89 894h-12z" fill="#fff"/>

        <g fill="none" stroke="#000" shape-rendering="crispEdges">
          <path d="M755 117l23 894M990 117l-31 894M1014 117l-36 894M1063 117l-48 894M1091 117l-55 894M1226 117l-85 894"/>
          <path d="M622 117l53 894M1022 117l-38 894M1217 117l-83 894M1263 117l-94 894" stroke-width="3"/>
          <path d="M1242 117l-89 894" stroke-width="4"/>
          <path d="M1547 117l70 190" stroke="#a02020"/>
          <path d="M637 366l125 14M648 561l120 19" stroke-width="2"/>
        </g>

        <path d="M703 374l59 6 4 148-14-30z" fill="url(#dots)"/>
        <path d="M703 374l59 6 4 148-14-30z" fill="url(#fade)"/>
        <path d="M762 380l6 200" stroke="#1010b0" stroke-width="3"/>

        <g transform="translate(780 310) scale(.3333)" stroke="#000" stroke-linejoin="round">
          <path d="M150 623L125 595Q88 530 88 400Q88 250 135 150Q165 90 200 70Q215 62 240 63Q290 65 318 125Q338 180 340 265Q345 380 315 460Q285 570 235 615Q215 630 205 632z" fill="url(#rim)" stroke-width="7"/>
          <path d="M245 68Q295 72 318 125Q338 180 340 265Q345 380 315 460Q285 570 235 615Q215 630 183 627Q123 560 123 390Q125 220 180 120Q210 75 245 68z" fill="#b0b0b0" stroke-width="3"/>
          <path d="M240 63Q290 65 318 125Q338 180 340 265Q345 380 315 460Q285 570 235 615Q215 630 205 632" fill="none" stroke-width="7"/>
          <path d="M157 397h11v13h-5v8h-3v-8h-3z" stroke-width="2"/>
          <path d="M565 292L800 101L828 101Q850 110 850 160Q850 220 833 260L590 490Q566 480 566 400z" fill="#b0b0b0" stroke-width="7"/>
          <path d="M597 305L832 106" stroke-width="3"/>
          <path d="M245 256L565 292L597 305Q567 330 567 400Q567 470 578 490L225 445Q200 430 200 360Q202 280 245 256z" fill="url(#tube)" stroke-width="3"/>
          <path d="M245 256L565 292M225 445L590 492" stroke-width="7"/>
        </g>

        <circle cx="762" cy="399" r="23" fill="none" stroke="#e05050" stroke-opacity=".45" stroke-width="4"/>
        <path d="M762 400v16l4-3 3 6 2-1-3-6h5z" stroke="#fff" stroke-width=".6"/>
      </svg>
    `);
  }
}

class SkScrollbar extends SkElement {
  connectedCallback() {
    this.render(`
      <style>
        :host { display: flex; flex-direction: column; width: 19px; background: #f1f1f1; }
        button { height: 20px; padding: 0; border: 0; background: none; display: grid; place-items: center; }
        .thumb { height: 21px; background: #cdcdcd; margin-bottom: auto; }
        :host([outer]) { padding-top: 2px; }
        :host([outer]) .thumb { margin-top: 12px; }
        path { fill: none; stroke: #555; stroke-width: 2; }
      </style>
      <button type="button" aria-label="위로"><svg width="10" height="7"><path d="M1 6l4-4 4 4"/></svg></button>
      <div class="thumb"></div>
      <button type="button" aria-label="아래로"><svg width="10" height="7"><path d="M1 1l4 4 4-4"/></svg></button>
    `);
  }
}

class SkMaterial extends SkElement {
  connectedCallback() {
    this.render(`
      <style>
        :host { display: block; box-sizing: border-box; }
        :host([framed]) { border: 1px solid #999; padding: 4px 0; }
        svg { display: block; width: 100%; height: 100%; }
      </style>
      <svg viewBox="0 0 10 10" preserveAspectRatio="none"><path d="M0 0h10v10H0z" fill="#fff"/><path d="M0 0l10 10H0z" fill="#a4b2ba"/></svg>
    `);
  }
}

class SkCombo extends SkElement {
  connectedCallback() {
    const value = this.getAttribute("value");
    this.render(`
      <style>
        :host { display: grid; min-width: 0; height: 26px; box-sizing: border-box; background: #fff; border: 2px solid; border-color: #777 #eee #eee #777; }
        :host([small]) { height: 22px; }
        select { grid-area: 1 / 1; appearance: none; min-width: 0; border: 0; padding: 0 0 0 3px; background: none; color: #000; font: 12px/16px "Noto Sans", "Noto Sans CJK KR", sans-serif; }
        .arrow { grid-area: 1 / 1; justify-self: end; width: 20px; box-sizing: border-box; display: grid; place-items: center; pointer-events: none;
          background: #f1f1f1; border: solid; border-width: 1px 2px 2px 1px; border-color: #fff #888 #888 #fff; }
        :host([line]) select { border-bottom: 1px solid #000; margin: 0 22px 0 3px; padding-left: 0; }
      </style>
      <select aria-label="${this.getAttribute("label")}"><option>${value}</option></select>
      <span class="arrow"><svg width="9" height="6"><path d="M0 0h9L4.500 5z"/></svg></span>
    `);
  }
}

class SkBrowserNav extends SkElement {
  connectedCallback() {
    this.render(`
      <style>
        :host { display: grid; grid-template-columns: 28px 24px 27px 157px 1fr; align-items: center;
          padding: 0 5px 0 9px; height: 35px; border-bottom: 1px solid #999; }
        button { padding: 0; border: 0; background: none; display: grid; justify-self: start; }
        .s { --icon-size: 16px; } .m { --icon-size: 20px; } .d { --icon-size: 18px; justify-self: end; }
      </style>
      <button type="button" class="s" aria-label="뒤로"><sk-icon name="prev"></sk-icon></button>
      <button type="button" class="s" aria-label="앞으로"><sk-icon name="next"></sk-icon></button>
      <button type="button" class="m" aria-label="홈"><sk-icon name="home"></sk-icon></button>
      <sk-combo value="${this.getAttribute("value")}" label="라이브러리" ${this.hasAttribute("line") ? "line" : ""}></sk-combo>
      <button type="button" class="d" aria-label="세부 정보"><sk-icon name="details"></sk-icon></button>
    `);
  }
}

class SkTiles extends SkElement {
  connectedCallback() {
    this.render(`
      <style>
        :host { display: grid; grid-template-columns: 1fr 20px; grid-template-rows: minmax(0, 1fr); background: #fff; min-height: 0; overflow: hidden; }
        .grid { display: grid; grid-template-columns: repeat(3, 62px); grid-auto-rows: 62px; gap: 2px; padding: 2px 3px 0; overflow: hidden; }
      </style>
      <div class="grid"><slot></slot></div>
      <sk-scrollbar></sk-scrollbar>
    `);
  }
}

class SkColor extends SkElement {
  connectedCallback() {
    this.render(`
      <style>
        :host { display: grid; }
        button { padding: 0; border: 1px solid #999; outline: 1px solid #fff; outline-offset: -2px; background: ${this.getAttribute("value")}; }
      </style>
      <button type="button" aria-label="${this.getAttribute("value")}"></button>
    `);
  }
}

class SkFolder extends SkElement {
  connectedCallback() {
    this.render(`
      <style>
        :host { display: grid; }
        button { display: grid; grid-template: minmax(0, 1fr) / minmax(0, 1fr); padding: 0; border: 1px solid #999; background: #fff; }
        svg { grid-area: 1 / 1; }
        span { grid-area: 1 / 1; place-self: end start; margin: 0 0 3px 2px; padding: 0 1px; background: #fff; color: #000; font: 11px/15px "Noto Sans", "Noto Sans CJK KR", sans-serif; }
        span:empty { display: none; }
      </style>
      <button type="button">
        <svg width="60" height="60" viewBox="0 0 60 60">
          <path d="M10 31l9-3 2 17-6-4z" fill="#aaa"/>
          <path d="M13 15l9-2 2 3 22-4-1 4-24 6-3 20z" fill="#7fb1cc" stroke="#444"/>
          <path d="M18 20l29-7-3 24-24 10z" fill="#b3986f" stroke="#555" stroke-width="1.500"/>
        </svg>
        <span>${this.textContent}</span>
      </button>
    `);
  }
}

class SkTray extends SkElement {
  connectedCallback() {
    const colors = ["#fcc", "#f99", "#f66", "#f33", "#f00", "#c00", "#900", "#600", "#ffd7cc", "#ffb399",
      "#ff8f66", "#ff6833", "#ff4200", "#cc3300", "#992600", "#661a00", "#ffe6cc", "#ffcc99"];
    this.render(`
      <style>
        :host { display: flex; flex-direction: column; min-height: 0; margin-left: 4px; padding-top: 1px; border-top: 1px solid #b0b0b0; box-sizing: border-box; }
        button { padding: 0; border: 0; background: none; display: grid; place-items: center; }
        header { display: flex; align-items: center; gap: 6px; height: 26px; padding: 0 4px; background: linear-gradient(#bccddd, #d3e1ee); --icon-size: 12px; font: 16px/24px "Noto Sans CJK KR", sans-serif; }
        header b { flex: 1; font-weight: 400; }
        header .close { width: 12px; height: 12px; background: #c75050; color: #fff; --icon-size: 10px; }
        .body { flex: 1; min-height: 0; display: grid; grid-template-columns: minmax(0, 1fr) 21px; grid-template-rows: minmax(0, 1fr); }
        .panel { display: flex; flex-direction: column; min-height: 0; }
        .entity { height: 174px; }
        .title { display: grid; grid-template-columns: 1fr 20px; gap: 5px; height: 25px; padding: 0 4px 0 2px; --icon-size: 16px; }
        .title h2 { margin: 0; padding-left: 9px; border-bottom: 1px solid #999; font: 700 12px/20px "Noto Sans", "Noto Sans CJK KR", sans-serif; }
        .title button { align-self: start; padding-top: 2px; }
        .layer { display: grid; grid-template-columns: 53px 1fr auto 119px; column-gap: 4px; align-items: start; padding: 10px 11px 0 13px; }
        .layer sk-material { height: 60px; }
        .layer label { grid-column: 3; font: 12px/22px "Noto Sans", "Noto Sans CJK KR", sans-serif; }
        .head { display: flex; align-items: center; gap: 8px; height: 23px; box-sizing: border-box; border: 1px solid #aaa; background: linear-gradient(#e6e6e6, #bbb); padding: 0 2px 0 9px; }
        .head h2 { flex: 1; margin: 0; font: 400 16px/20px "Noto Sans CJK KR", sans-serif; }
        .head .close { width: 16px; height: 16px; box-sizing: border-box; border: 1px solid #999; background: #eee; --icon-size: 12px; }
        .current { display: grid; grid-template-columns: 77px 1fr 26px; gap: 4px; padding: 2px; border-bottom: 1px solid #999; }
        .current > sk-material { height: 88px; }
        .current input { height: 23px; margin-top: 1px; box-sizing: border-box; width: 100%; border: 2px solid; border-color: #777 #fff #fff #777; background: #f1f1f1; color: #777; padding: 0 2px; font: 12px/16px "Noto Sans CJK KR", sans-serif; }
        .side { display: grid; justify-items: center; align-content: space-between; padding-top: 3px; }
        .side sk-material { width: 26px; height: 26px; }
        .a { --icon-size: 18px; } .b { --icon-size: 22px; }
        .tabs { display: flex; height: 31px; align-items: flex-end; padding-right: 4px; }
        .tabs button { height: 20px; width: 47px; padding-left: 6px; justify-items: start; border: solid; border-width: 1px 2px 0 0; border-color: #fff #777; font: 12px/16px "Noto Sans CJK KR", sans-serif; }
        .tabs button:first-child { width: 51px; height: 22px; padding: 0 0 3px 8px; }
        .tabs .pick { width: auto; height: 20px; margin: 0 0 4px auto; border: 0; padding: 0; --icon-size: 20px; }
        .colors { flex: 1; }
        .sub { margin: 3px 0 0; padding: 2px 0 0 5px; height: 28px; box-sizing: border-box; border: solid #777; border-width: 2px 0 1px; background: #e4e4e4; }
        .sub h3 { margin: 0; font: 12px/22px "Noto Sans CJK KR", sans-serif; }
        .folders { height: 105px; }
        .frame { height: 6px; box-sizing: border-box; border: 1px solid #aaa; margin-top: 1px; }
        sk-scrollbar { justify-self: end; }
      </style>
      <header>
        <b>기본 트레이</b>
        <button type="button" aria-label="고정"><sk-icon name="pin"></sk-icon></button>
        <button type="button" class="close" aria-label="트레이 닫기"><sk-icon name="close"></sk-icon></button>
      </header>
      <div class="body">
        <div class="panel">
          <div class="entity">
            <div class="title"><h2>5개 요소</h2><button type="button" aria-label="확장"><sk-icon name="expand"></sk-icon></button></div>
            <div class="layer">
              <sk-material framed></sk-material>
              <label>레이어(<u>L</u>):</label>
              <sk-combo small value="Layer0" label="레이어(L):"></sk-combo>
            </div>
          </div>
          <div class="head">
            <svg width="10" height="9"><path d="M0 0h10L5 9z"/></svg>
            <h2>재질</h2>
            <button type="button" class="close" aria-label="닫기"><sk-icon name="close"></sk-icon></button>
          </div>
          <div class="current">
            <sk-material framed></sk-material>
            <input type="text" value="기본값" aria-label="재질 이름" disabled>
            <div class="side">
              <button type="button" class="a" aria-label="축소"><sk-icon name="collapse"></sk-icon></button>
              <button type="button" class="b" aria-label="재질 만들기"><sk-icon name="create"></sk-icon></button>
              <sk-material></sk-material>
            </div>
          </div>
          <div class="tabs">
            <button type="button">선택</button><button type="button">편집</button>
            <button type="button" class="pick" aria-label="샘플 페인트"><sk-icon name="dropper"></sk-icon></button>
          </div>
          <sk-browser-nav value="색상"></sk-browser-nav>
          <sk-tiles class="colors">${colors.map((c) => `<sk-color value="${c}"></sk-color>`).join("")}</sk-tiles>
          <div class="sub"><h3>선택</h3></div>
          <sk-browser-nav value="재질" line></sk-browser-nav>
          <sk-tiles class="folders">${["3D 인쇄", "금속", "목재", "", "", ""].map((f) => `<sk-folder>${f}</sk-folder>`).join("")}</sk-tiles>
          <div class="frame"></div>
        </div>
        <sk-scrollbar outer></sk-scrollbar>
      </div>
    `);
  }
}

class SkStatusBar extends SkElement {
  connectedCallback() {
    this.render(`
      <style>
        :host { display: flex; align-items: center; height: 25px; box-sizing: border-box; padding: 4px 5px 0 6px; font: 17px/20px "Noto Sans CJK KR", sans-serif; white-space: nowrap; --icon-size: 19px; }
        .icons { display: flex; gap: 16px; padding-right: 12px; }
        button { padding: 0; border: 0; background: none; }
        p { flex: 1; min-width: 0; overflow: hidden; margin: 0; padding-left: 10px; line-height: 22px; border-left: 1px solid #999; }
        label { display: flex; gap: 8px; padding-left: 11px; border-left: 1px solid #999; line-height: 22px; }
        input { width: 250px; height: 24px; box-sizing: border-box; border: 1px solid #b4c0cc; background: #f1f1f1; }
      </style>
      <div class="icons">
        <button type="button" aria-label="위치"><sk-icon name="geo"></sk-icon></button>
        <button type="button" aria-label="크레딧"><sk-icon name="credit"></sk-icon></button>
        <button type="button" aria-label="계정"><sk-icon name="account"></sk-icon></button>
      </div>
      <p><slot></slot></p>
      <label>단위 <input type="text"></label>
    `);
  }
}

customElements.define("sk-icon", SkIcon);
customElements.define("sk-tool", SkTool);
customElements.define("sk-scrollbar", SkScrollbar);
customElements.define("sk-material", SkMaterial);
customElements.define("sk-combo", SkCombo);
customElements.define("sk-browser-nav", SkBrowserNav);
customElements.define("sk-tiles", SkTiles);
customElements.define("sk-color", SkColor);
customElements.define("sk-folder", SkFolder);
customElements.define("sk-menu-bar", SkMenuBar);
customElements.define("sk-top-tools", SkTopTools);
customElements.define("sk-palette", SkPalette);
customElements.define("sk-viewport", SkViewport);
customElements.define("sk-tray", SkTray);
customElements.define("sk-status-bar", SkStatusBar);
customElements.define("sk-app", SkApp);
</script>
</body>
</html>
